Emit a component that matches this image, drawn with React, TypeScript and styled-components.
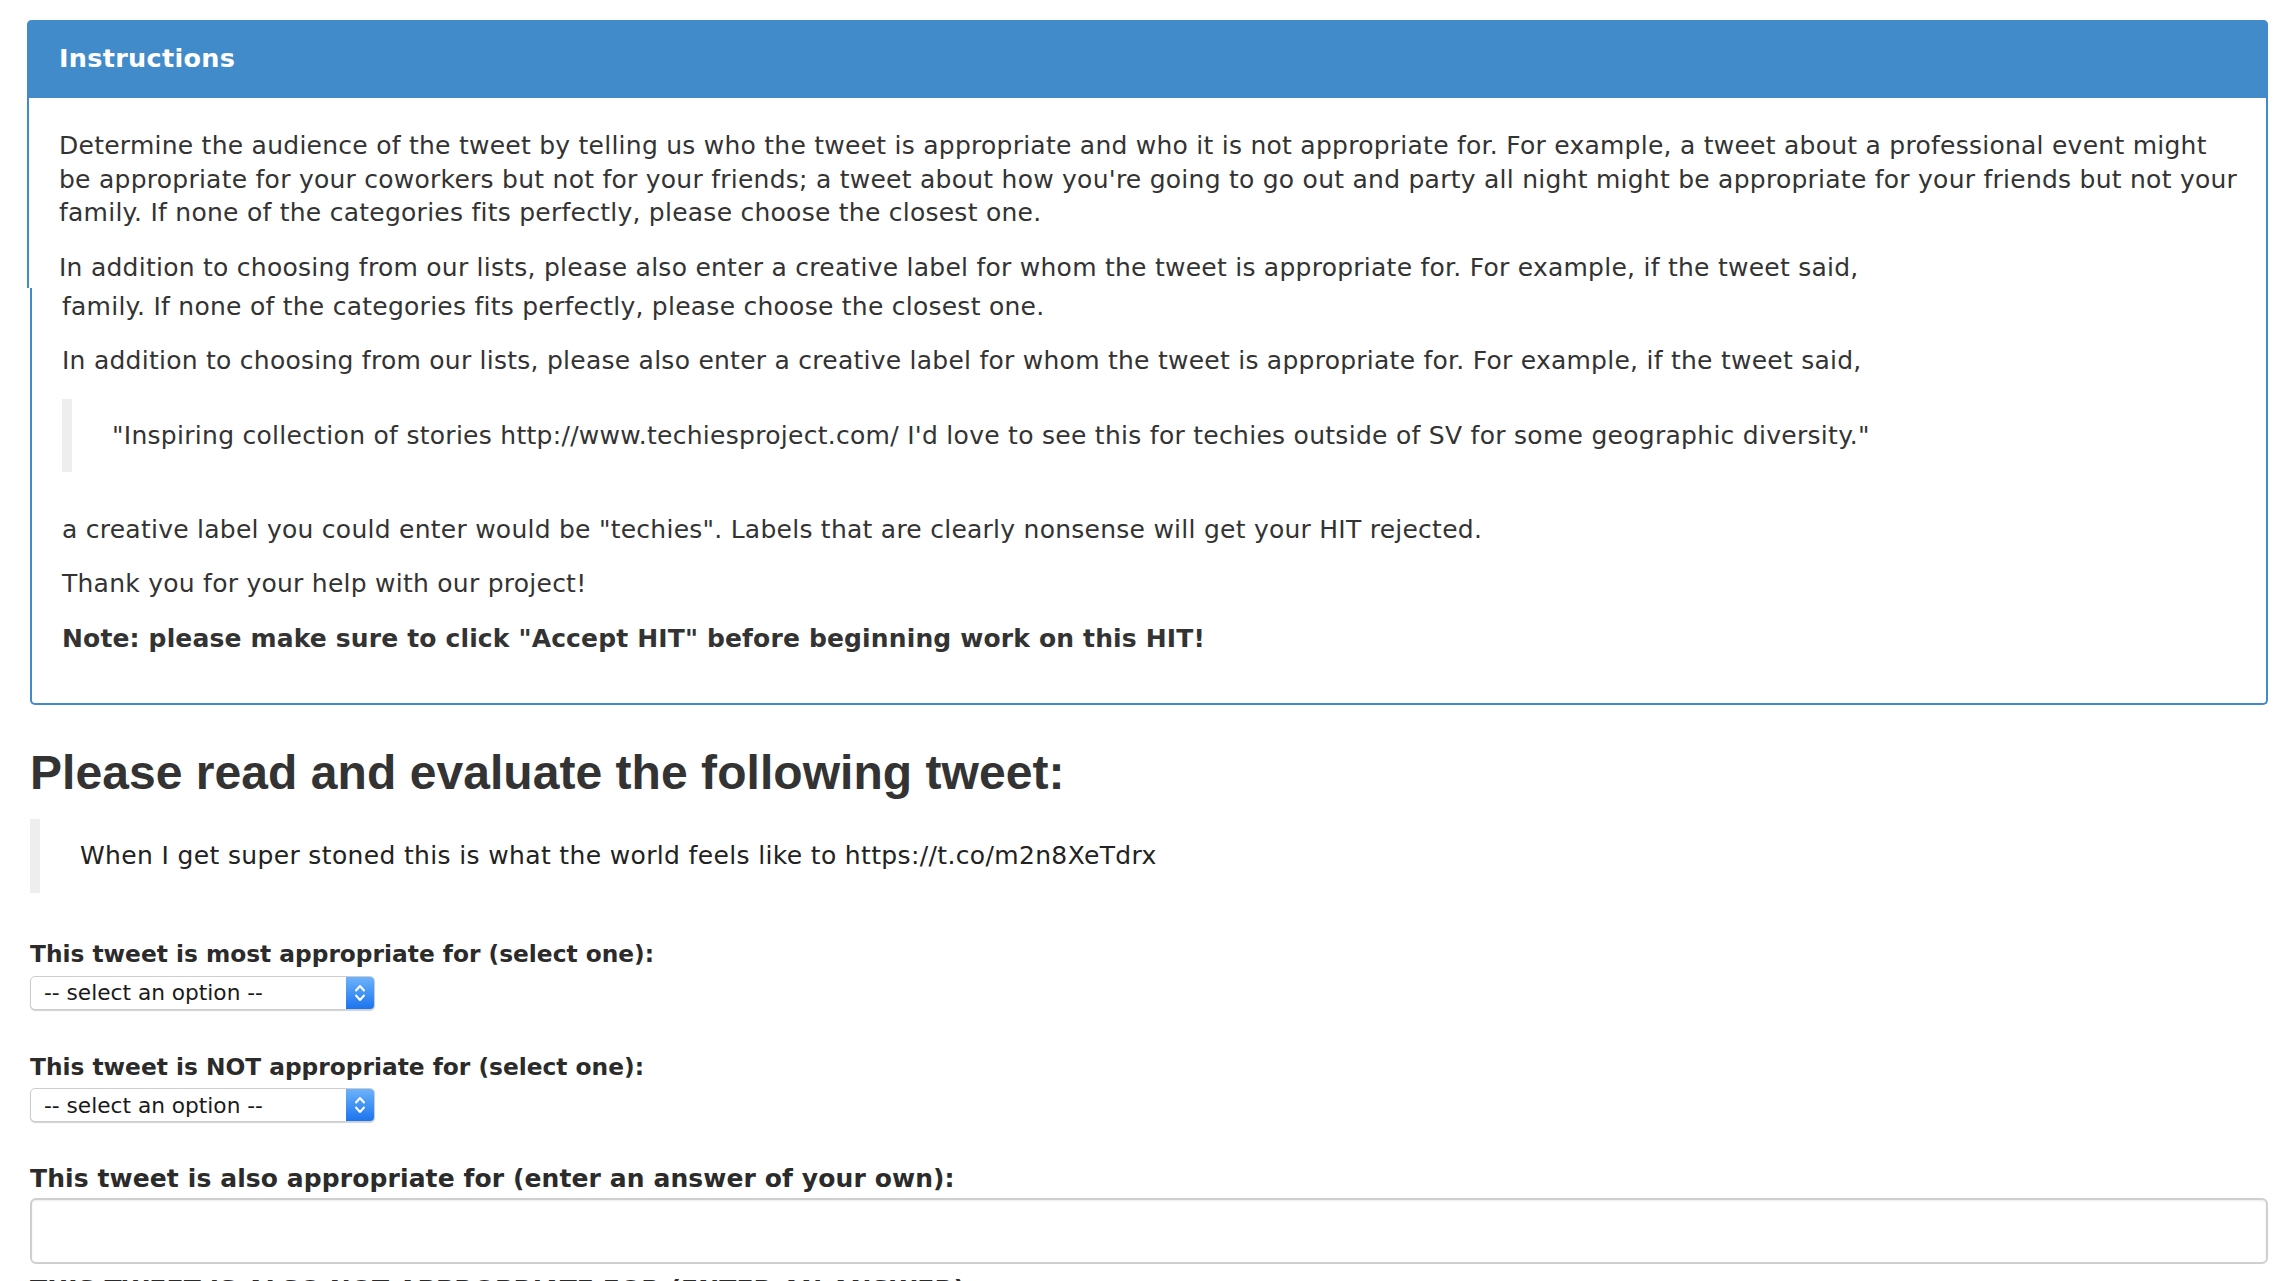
import React from "react";
import styled, { createGlobalStyle } from "styled-components";

const GlobalStyle = createGlobalStyle`
  html, body {
    margin: 0;
    padding: 0;
    overflow: hidden;
    background: #fff;
  }
  body {
    font-family: "DejaVu Sans", Verdana, sans-serif;
    color: #333;
  }
`;

const Page = styled.div`
  width: 2238px;
  padding: 20px 0 0 30px;
  font-size: 25px;
  letter-spacing: 0.25px;
  line-height: 33.5px;
`;

const Panel = styled.section`
  margin-bottom: 42px;
`;

// top part of the panel sits 3px further left than the rest
const PanelTop = styled.div`
  margin-left: -3px;
  border: 2px solid #428bca;
  border-top: none;
  border-bottom: none;
  border-radius: 5px 5px 0 0;
`;

const PanelHeader = styled.div`
  height: 78px;
  margin: 0 -2px;
  padding: 0 32px;
  display: flex;
  align-items: center;
  background: #428bca;
  border-radius: 5px 5px 0 0;
  color: #fff;
  font-weight: bold;
  font-size: 25.5px;
  letter-spacing: 0.3px;
`;

const PanelBody = styled.div<{ $lower?: boolean }>`
  padding: ${(p) => (p.$lower ? "2px 30px 48px" : "31px 14px 3.5px 30px")};
  border: 2px solid #428bca;
  border-width: ${(p) => (p.$lower ? "0 2px 2px 2px" : "0")};
  border-radius: ${(p) => (p.$lower ? "0 0 5px 5px" : "0")};
`;

const Para = styled.p<{ $bold?: boolean }>`
  margin: 0 0 21px;
  font-weight: ${(p) => (p.$bold ? "bold" : "normal")};
  letter-spacing: ${(p) => (p.$bold ? "0.15px" : "0.25px")};
  &:last-child {
    margin-bottom: 0;
  }
`;

const Quote = styled.blockquote<{ $tweet?: boolean }>`
  margin: ${(p) => (p.$tweet ? "20px 0 44.5px" : "20px 0 40.5px")};
  padding: 20px 0 20px 40px;
  border-left: 10px solid #eee;
  color: ${(p) => (p.$tweet ? "#222" : "#333")};
  letter-spacing: ${(p) => (p.$tweet ? "0.35px" : "0.28px")};
`;

const Heading = styled.h2`
  margin: 0;
  font-family: "Liberation Sans", Arial, sans-serif;
  font-size: 48px;
  line-height: 52px;
  letter-spacing: 0.05px;
  font-weight: bold;
  color: #333;
`;

const Field = styled.div`
  margin-bottom: 40px;
`;

const Label = styled.label<{ $large?: boolean }>`
  display: block;
  margin-bottom: ${(p) => (p.$large ? "2px" : "5px")};
  font-size: ${(p) => (p.$large ? "25px" : "23.3px")};
  letter-spacing: ${(p) => (p.$large ? "0.1px" : "0")};
  font-weight: bold;
  color: #2b2b2b;
`;

const SelectBox = styled.div`
  width: 345px;
  height: 34px;
  display: flex;
  box-sizing: border-box;
  border: 1px solid #cdcdcd;
  border-radius: 5px;
  box-shadow: 0 1px 1px rgba(0, 0, 0, 0.18);
  background: #fff;
  overflow: hidden;
`;

const SelectInput = styled.select`
  flex: 1;
  appearance: none;
  border: none;
  outline: none;
  background: transparent;
  padding: 0 0 0 13px;
  font-family: "DejaVu Sans", Verdana, sans-serif;
  font-size: 21.7px;
  color: #1a1a1a;
`;

const Stepper = styled.span`
  width: 28px;
  display: flex;
  align-items: center;
  justify-content: center;
  background: linear-gradient(#6db3fb, #1b74ef);
`;

const TextArea = styled.textarea`
  display: block;
  width: 100%;
  height: 66px;
  box-sizing: border-box;
  margin: 0 0 9px;
  border: 2px solid #cfcfcf;
  border-radius: 6px;
  box-shadow: inset 0 1px 2px rgba(0, 0, 0, 0.08);
  resize: none;
  outline: none;
`;

const Chevrons = () => (
  <svg width="14" height="22" viewBox="0 0 14 22" fill="none">
    <path d="M3 8.5 7 4l4 4.5" stroke="#fff" strokeWidth="2" strokeLinecap="round" strokeLinejoin="round" />
    <path d="M3 13.5 7 18l4-4.5" stroke="#fff" strokeWidth="2" strokeLinecap="round" strokeLinejoin="round" />
  </svg>
);

const Select = () => (
  <SelectBox>
    <SelectInput defaultValue="">
      <option value="">-- select an option --</option>
    </SelectInput>
    <Stepper>
      <Chevrons />
    </Stepper>
  </SelectBox>
);

const familyLine =
  "family. If none of the categories fits perfectly, please choose the closest one.";
const additionLine =
  "In addition to choosing from our lists, please also enter a creative label for whom the tweet is appropriate for. For example, if the tweet said,";

export default function App() {
  return (
    <>
      <GlobalStyle />
      <Page>
        <Panel>
          <PanelTop>
            <PanelHeader>Instructions</PanelHeader>
            <PanelBody>
              <Para>
                Determine the audience of the tweet by telling us who the tweet is appropriate and
                who it is not appropriate for. For example, a tweet about a professional event might
                <br />
                be appropriate for your coworkers but not for your friends; a tweet about how you're
                going to go out and party all night might be appropriate for your friends but not
                your
                <br />
                {familyLine}
              </Para>
              <Para>{additionLine}</Para>
            </PanelBody>
          </PanelTop>
          <PanelBody $lower>
            <Para>{familyLine}</Para>
            <Para>{additionLine}</Para>
            <Quote>
              "Inspiring collection of stories http://www.techiesproject.com/ I'd love to see this
              for techies outside of SV for some geographic diversity."
            </Quote>
            <Para>
              a creative label you could enter would be "techies". Labels that are clearly nonsense
              will get your HIT rejected.
            </Para>
            <Para>Thank you for your help with our project!</Para>
            <Para $bold>
              Note: please make sure to click "Accept HIT" before beginning work on this HIT!
            </Para>
          </PanelBody>
        </Panel>

        <Heading>Please read and evaluate the following tweet:</Heading>
        <Quote $tweet>When I get super stoned this is what the world feels like to https://t.co/m2n8XeTdrx</Quote>

        <Field>
          <Label>This tweet is most appropriate for (select one):</Label>
          <Select />
        </Field>
        <Field>
          <Label>This tweet is NOT appropriate for (select one):</Label>
          <Select />
        </Field>
        <div>
          <Label $large>This tweet is also appropriate for (enter an answer of your own):</Label>
          <TextArea />
          <Label $large>THIS TWEET IS ALSO NOT APPROPRIATE FOR (ENTER AN ANSWER):</Label>
        </div>
      </Page>
    </>
  );
}
